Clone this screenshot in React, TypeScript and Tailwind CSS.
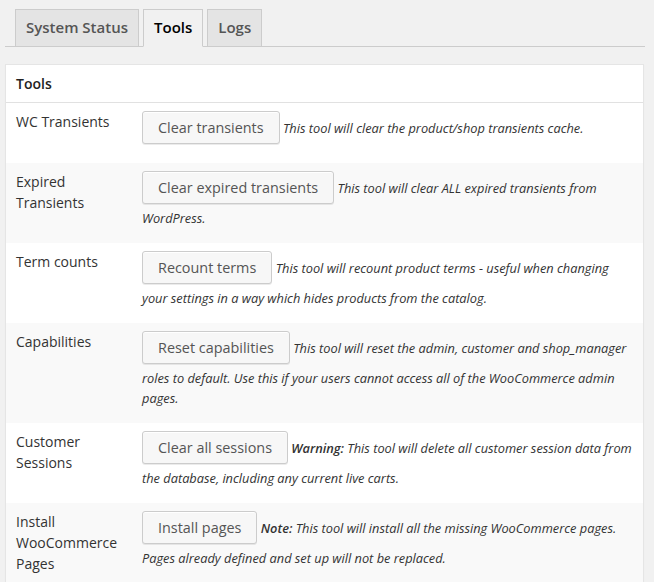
import React from "react";

type Row = {
  label: string;
  button: string;
  prefix?: string;
  desc: string;
};

const rows: Row[] = [
  { label: "WC Transients", button: "Clear transients", desc: "This tool will clear the product/shop transients cache." },
  { label: "Expired Transients", button: "Clear expired transients", desc: "This tool will clear ALL expired transients from WordPress." },
  { label: "Term counts", button: "Recount terms", desc: "This tool will recount product terms - useful when changing your settings in a way which hides products from the catalog." },
  { label: "Capabilities", button: "Reset capabilities", desc: "This tool will reset the admin, customer and shop_manager roles to default. Use this if your users cannot access all of the WooCommerce admin pages." },
  { label: "Customer Sessions", button: "Clear all sessions", prefix: "Warning:", desc: "This tool will delete all customer session data from the database, including any current live carts." },
  { label: "Install WooCommerce Pages", button: "Install pages", prefix: "Note:", desc: "This tool will install all the missing WooCommerce pages. Pages already defined and set up will not be replaced." },
];

export default function App() {
  return (
    <div
      className="min-h-[582px] bg-[#f1f1f1] text-[#333]"
      style={{ fontFamily: '"Open Sans", "Noto Sans", sans-serif' }}
    >
      <div className="w-[645px] pl-[5px]">
        <div className="flex gap-[4px] border-b border-[#ccc] pl-[10px] pt-[9px]">
          <div className="-mb-px border border-[#ccc] bg-[#e4e4e4] px-[10px] pb-[6px] pt-[5px] text-[15px] font-semibold leading-[25px] text-[#555]">
            System Status
          </div>
          <div className="-mb-px border border-[#ccc] border-b-[#f1f1f1] bg-[#f1f1f1] px-[10px] pb-[6px] pt-[5px] text-[15px] font-semibold leading-[25px] text-black">
            Tools
          </div>
          <div className="-mb-px border border-[#ccc] bg-[#e4e4e4] px-[10px] pb-[6px] pt-[5px] text-[15px] font-semibold leading-[25px] text-[#555]">
            Logs
          </div>
        </div>
      </div>

      <div className="ml-[5px] mt-[17px] w-[639px] border border-[#e5e5e5] bg-white shadow-[0_1px_1px_rgba(0,0,0,0.04)]">
        <div className="border-b border-[#e1e1e1] px-[10px] py-[8px] text-[14px] font-semibold leading-[21px] text-[#222]">
          Tools
        </div>
        {rows.map((r, i) => (
          <div
            key={r.label}
            className={`grid grid-cols-[126px_1fr] ${i % 2 === 1 ? "bg-[#f9f9f9]" : "bg-white"}`}
          >
            <div className="px-[10px] py-[8px] text-[14px] leading-[21px] text-[#333]">{r.label}</div>
            <div className="pb-[15px] pl-[10px] pr-[7px] pt-[8px] text-[12.8px] italic leading-[20px] text-[#333]">
              <span className="mb-[4px] inline-block h-[33px] rounded-[3px] border border-[#ccc] bg-[#f7f7f7] px-[15px] text-[14.4px] not-italic leading-[31px] text-[#555] shadow-[inset_0_1px_0_#fff,0_1px_0_rgba(0,0,0,0.08)]">
                {r.button}
              </span>{" "}
              {r.prefix && <strong className="font-semibold">{r.prefix}</strong>}
              {r.prefix && " "}
              {r.desc}
            </div>
          </div>
        ))}
      </div>
    </div>
  );
}
